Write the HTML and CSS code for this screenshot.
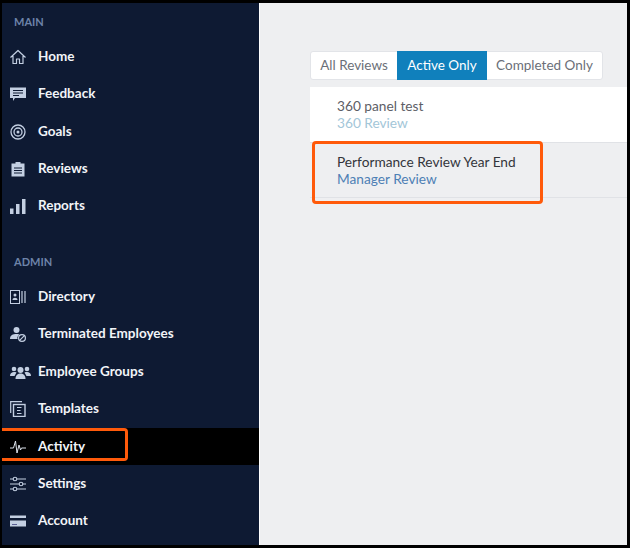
FILE: index.html
```html
<!DOCTYPE html>
<html lang="en">
<head>
<meta charset="utf-8">
<title>Reviews</title>
<link rel="stylesheet" href="styles.css">
</head>
<body>
<div class="frame">
  <nav class="sidebar">
    <div class="section-label">MAIN</div>
    <a class="nav-item"><svg class="icon" viewBox="0 0 16 16"><path d="M.5 8.500 8 1.500l7.500 7M3 7v7.500h3.500V10h3v4.500H13V7" fill="none" stroke="#c3cfe2" stroke-width="1.200" stroke-linejoin="round"/></svg><span>Home</span></a>
    <a class="nav-item"><svg class="icon" viewBox="0 0 16 16"><path d="M0 1.500h16V12H5L3 15v-3H0z" fill="#c3cfe2"/><path d="M3 4.500h10M3 7h10M3 9.500h6" stroke="#0e1a33" stroke-width="1"/></svg><span>Feedback</span></a>
    <a class="nav-item"><svg class="icon" viewBox="0 0 16 16"><g fill="none" stroke="#c3cfe2"><circle cx="8" cy="8" r="7" stroke-width="1.300"/><circle cx="8" cy="8" r="4" stroke-width="1.300"/></g><circle cx="8" cy="8" r="1.500" fill="#c3cfe2"/></svg><span>Goals</span></a>
    <a class="nav-item"><svg class="icon" viewBox="0 0 16 16"><path d="M1.500 2.500H5.500V1h5v1.500h4V15.500H1.500z" fill="#c3cfe2"/><path d="M4 7h8M4 9.500h8M4 12h8" stroke="#0e1a33" stroke-width="1"/></svg><span>Reviews</span></a>
    <a class="nav-item"><svg class="icon" viewBox="0 0 16 16"><path d="M0 10.500h3.500V16H0zM6 6h3.500V16H6zM12 1h3.500V16H12z" fill="#c3cfe2"/></svg><span>Reports</span></a>
    <div class="section-label admin">ADMIN</div>
    <a class="nav-item"><svg class="icon" viewBox="0 0 16 16"><rect x="0.500" y="1.500" width="9" height="13" fill="none" stroke="#c3cfe2"/><circle cx="5" cy="6" r="1.500" fill="#c3cfe2"/><path d="M2.500 11c0-3 5-3 5 0z" fill="#c3cfe2"/><path d="M12 2v12M15 2v12" stroke="#c3cfe2" stroke-width="1.200"/></svg><span>Directory</span></a>
    <a class="nav-item"><svg class="icon" viewBox="0 0 16 16"><circle cx="6.500" cy="4" r="3" fill="#c3cfe2"/><path d="M0 13c0-4 3-5 6.500-5 1 0 2 .1 2.800.4A5 5 0 0 0 7.500 13z" fill="#c3cfe2"/><g fill="none" stroke="#c3cfe2" stroke-width="1.200"><circle cx="12" cy="12" r="3.400"/><path d="m9.600 14.400 4.800-4.800"/></g></svg><span>Terminated Employees</span></a>
    <a class="nav-item"><svg class="icon icon-wide" viewBox="0 0 21 16"><g fill="#c3cfe2"><circle cx="4" cy="5" r="2.300"/><circle cx="17" cy="5" r="2.300"/><path d="M0 12c0-3 2-4 4-4s2.500.5 2.500.5L4.500 12zM21 12c0-3-2-4-4-4s-2.500.5-2.500.5l2 3.500z"/><circle cx="10.500" cy="6" r="3"/><path d="M5.500 15c0-4 2.500-5.500 5-5.500s5 1.500 5 5.500z"/></g></svg><span>Employee Groups</span></a>
    <a class="nav-item"><svg class="icon" viewBox="0 0 16 16"><path d="M.7 12V.7H12" fill="none" stroke="#c3cfe2" stroke-width="1.200"/><rect x="3.500" y="3.500" width="11.500" height="12" fill="none" stroke="#c3cfe2" stroke-width="1.400"/><path d="M7 6.500h4.500M7 9.500h3.500M7 12.500h4.500" stroke="#c3cfe2" stroke-width="1.200"/></svg><span>Templates</span></a>
    <a class="nav-item active"><svg class="icon" viewBox="0 0 16 16"><path d="M0 9h3.500L5.500 2l1.500 12 2-8 1.500 5 1-2h4.500" fill="none" stroke="#dfe5ee" stroke-width="1"/></svg><span>Activity</span></a>
    <a class="nav-item"><svg class="icon" viewBox="0 0 16 16"><g fill="none" stroke="#c3cfe2" stroke-width="1.100"><path d="M0 3h3M7 3h9M0 8h9M13 8h3M0 13h3M7 13h9"/><circle cx="5" cy="3" r="1.800"/><circle cx="11" cy="8" r="1.800"/><circle cx="5" cy="13" r="1.800"/></g></svg><span>Settings</span></a>
    <a class="nav-item"><svg class="icon" viewBox="0 0 16 16"><path d="M0 2.500h16v2.500H0zM0 7.500h16v6H0z" fill="#c3cfe2"/><path d="M2 11.500h5" stroke="#5b5f92" stroke-width="1"/></svg><span>Account</span></a>
  </nav>
  <main class="content">
    <div class="tabs">
      <span class="tab tab-all">All Reviews</span>
      <span class="tab tab-active">Active Only</span>
      <span class="tab tab-done">Completed Only</span>
    </div>
    <ul class="reviews">
      <li class="review review-open">
        <div class="review-title">360 panel test</div>
        <div class="review-type type-light">360 Review</div>
      </li>
      <li class="review">
        <div class="review-title title-dark">Performance Review Year End</div>
        <div class="review-type">Manager Review</div>
      </li>
    </ul>
  </main>
  <div class="mark mark-activity"></div>
  <div class="mark mark-review"></div>
</div>
</body>
</html>
```
FILE: styles.css
```css
* { box-sizing: border-box; }
html, body { margin: 0; padding: 0; background: #000; }
.frame {
  position: relative;
  display: flex;
  width: 630px;
  height: 548px;
  border-style: solid;
  border-color: #000;
  border-width: 3px 3px 3px 2px;
  overflow: hidden;
  font-family: Lato, "Open Sans", sans-serif;
}
.sidebar {
  width: 257px;
  flex: none;
  background: #0e1a33;
  color: #fff;
}
.section-label {
  height: 35px;
  padding: 12px 0 0 12px;
  font-size: 11px;
  line-height: 14px;
  font-weight: 700;
  color: #6d83a8;
}
.section-label.admin { height: 53px; padding-top: 30px; }
.nav-item {
  display: flex;
  align-items: center;
  height: 37.430px;
  padding-left: 8px;
  font-size: 13.500px;
  font-weight: 700;
  color: #f2f4f8;
}
.nav-item span { margin-bottom: 2px; }
.nav-item.active { background: #000; }
.icon {
  width: 16px;
  height: 16px;
  flex: none;
  margin-right: 12px;
}
.icon-wide { width: 21px; margin-right: 7px; }
.content {
  flex: 1;
  background: #eeeff1;
  border-left: 1px solid #fff;
  padding: 48px 0 0 50px;
}
.tabs {
  display: inline-flex;
  height: 29px;
  background: #fff;
  border: 1px solid #e2e4e8;
  border-radius: 3px;
  font-size: 13.500px;
  color: #6b6f78;
}
.tab {
  display: flex;
  align-items: center;
  justify-content: center;
  padding: 0 0 2px;
}
.tab-all { width: 86px; }
.tab-done { width: 115px; }
.tab-active {
  margin: -1px 0;
  background: #1080bc;
  color: #fff;
  width: 90px;
}
.reviews {
  list-style: none;
  margin: 7px 0 0;
  padding: 0;
}
.review {
  height: 55.500px;
  padding: 10px 0 0 27px;
  border-bottom: 1px solid #e0e2e6;
  font-size: 13.700px;
  line-height: 17px;
}
.review-open { background: #fff; }
.review-title { color: #5c5e66; }
.title-dark { color: #33353b; }
.review-type { color: #4d80b5; }
.type-light { color: #a3c6d8; }
.mark {
  position: absolute;
  border: 3px solid #ff5a0a;
  border-radius: 4px;
}
.mark-activity {
  left: 0;
  top: 425px;
  width: 126px;
  height: 33px;
  border-left: 0;
  border-radius: 0 4px 4px 0;
}
.mark-review {
  left: 310px;
  top: 138px;
  width: 231px;
  height: 63px;
}
```
